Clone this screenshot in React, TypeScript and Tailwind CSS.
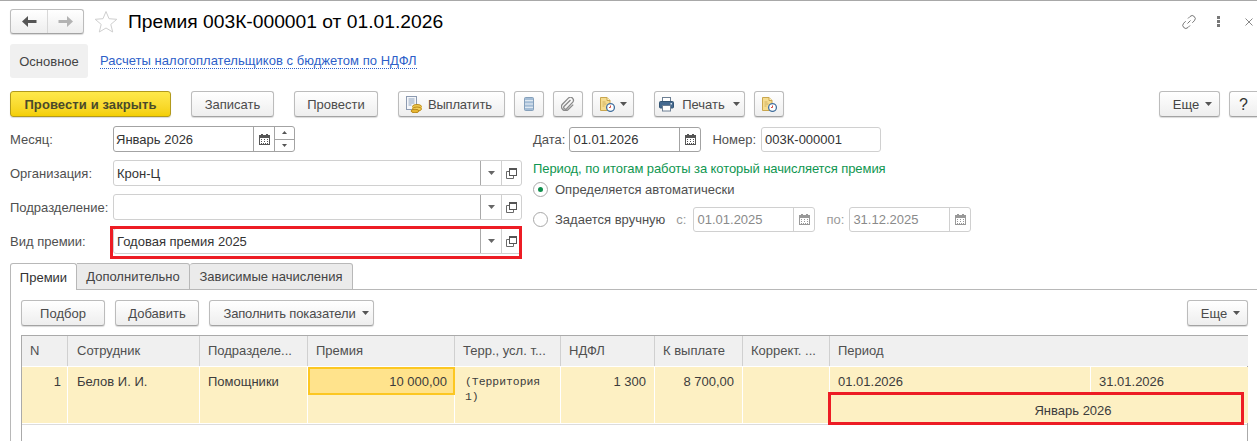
import React from "react";

const Tri = ({ c = "#555" }: { c?: string }) => (
  <svg width="7" height="4" viewBox="0 0 7 4" className="shrink-0"><path d="M0 0h7L3.5 4z" fill={c} /></svg>
);

const Cal = ({ c = "#555" }: { c?: string }) => (
  <svg width="11" height="11" viewBox="0 0 11 11" className="shrink-0">
    <rect x="0.5" y="1.5" width="10" height="9" fill="#fff" stroke={c} />
    <rect x="0" y="1" width="11" height="3" fill={c} />
    <rect x="2" y="0" width="2" height="2" fill={c} />
    <rect x="7" y="0" width="2" height="2" fill={c} />
    <path d="M2 5.5h1M5 5.5h1M8 5.5h1M2 7.5h1M5 7.5h1M8 7.5h1" stroke={c} />
    <path d="M2 9.5h7" stroke={c} strokeDasharray="1 1" />
  </svg>
);

const OpenIcon = () => (
  <svg width="11" height="11" viewBox="0 0 11 11" className="shrink-0">
    <rect x="3.5" y="0.5" width="7" height="7" fill="none" stroke="#555" />
    <path d="M3.5 1.5h7" stroke="#555" />
    <path d="M3 3.5H.5v7h7V8" fill="none" stroke="#6a6a6a" />
  </svg>
);

const DocCoins = () => (
  <svg width="16" height="17" viewBox="0 0 16 17" className="shrink-0">
    <rect x="0.5" y="0.5" width="10" height="13" fill="#f4f6fa" stroke="#8c9ab0" />
    <path d="M2.5 3h6M2.5 5h6M2.5 7h6M2.5 9h3" stroke="#8ea3bd" />
    <ellipse cx="11" cy="10.5" rx="4.5" ry="2" fill="#f2cd55" stroke="#b98a1c" />
    <rect x="6.5" y="10.5" width="9" height="2.5" fill="#eec040" />
    <ellipse cx="11" cy="13" rx="4.5" ry="2" fill="#f2cd55" stroke="#b98a1c" />
    <ellipse cx="9" cy="15" rx="4" ry="1.7" fill="#e8b734" stroke="#b98a1c" />
  </svg>
);

const DocClock = () => (
  <svg width="15" height="15" viewBox="0 0 15 15" className="shrink-0">
    <path d="M.5.5h6.5l3 3v10H.5z" fill="#f5dc8f" stroke="#c9a64e" />
    <path d="M7 .5V3.5h3" fill="#fff4c8" stroke="#c9a64e" />
    <path d="M2.5 5h3M2.5 7h4M2.5 9h2" stroke="#d0b060" />
    <circle cx="10.5" cy="10.5" r="3.9" fill="#fff" stroke="#42709e" strokeWidth="1.3" />
    <path d="M10.5 8.5v2h-1.5" fill="none" stroke="#d24b3e" strokeWidth="1" />
  </svg>
);

const Printer = () => (
  <svg width="15" height="15" viewBox="0 0 15 15" className="shrink-0">
    <rect x="3.5" y="0.5" width="8" height="5" fill="#fff" stroke="#6d7f93" />
    <rect x="0.5" y="4.5" width="14" height="6.5" rx="1" fill="#456a90" stroke="#345574" />
    <rect x="3.5" y="8.5" width="8" height="5.5" fill="#fff" stroke="#6d7f93" />
    <rect x="11.5" y="6" width="1.5" height="1.5" fill="#dbe6f0" />
  </svg>
);

const ListIcon = () => (
  <svg width="10" height="14" viewBox="0 0 10 14" className="shrink-0">
    <rect x="0.5" y="0.5" width="9" height="13" rx="1" fill="#a4bdd6" stroke="#85a0bb" />
    <path d="M1 3.7h8M1 7h8M1 10.3h8" stroke="#eef3f8" />
  </svg>
);

const Clip = () => (
  <svg width="14" height="14" viewBox="0 0 14 14" className="shrink-0">
    <path d="M9.5 3 3.2 9.3a1.7 1.7 0 0 0 2.4 2.4l6.2-6.6a3 3 0 0 0-4.2-4.2L1.4 7.2a4 4 0 0 0 5.6 5.6l5.2-5.2" fill="none" stroke="#8a8a8a" strokeWidth="1.3" />
  </svg>
);

const Btn = ({ w, children, className = "" }: { w: string; children: React.ReactNode; className?: string }) => (
  <div className={`${w} h-[26px] shrink-0 flex items-center justify-center rounded-[3px] border border-[#bcbcbc] border-b-[#a3a3a3] bg-linear-to-b from-white to-[#eeeeee] shadow-[0_1px_1px_rgba(0,0,0,0.15)] text-[#4b4b4b] ${className}`}>
    {children}
  </div>
);

const Label = ({ children }: { children: React.ReactNode }) => (
  <div className="w-[103px] shrink-0 text-[#4f4f4f]">{children}</div>
);

const PickerInput = ({ value }: { value?: string }) => (
  <div className="h-[26px] w-[409px] flex items-stretch rounded-[3px] border border-[#d0d0d0] bg-white">
    <div className="flex-1 pl-[3px] flex items-center text-[#333]">{value}</div>
    <div className="w-[21px] border-l border-[#a9a9a9] flex items-center justify-center"><Tri c="#666" /></div>
    <div className="w-[20px] border-l border-[#d0d0d0] flex items-center justify-center"><OpenIcon /></div>
  </div>
);

const DateField = ({ w, value, dim }: { w: string; value: string; dim?: boolean }) => (
  <div className={`${w} h-[25px] flex items-stretch rounded-[3px] border bg-white ${dim ? "border-[#d0d0d0] text-[#8a8a8a]" : "border-[#a3a3a3] text-[#333]"}`}>
    <div className="flex-1 pl-[3px] flex items-center">{value}</div>
    <div className={`w-[21px] border-l flex items-center justify-center ${dim ? "border-[#d0d0d0]" : "border-[#a3a3a3]"}`}><Cal c={dim ? "#999" : "#555"} /></div>
  </div>
);

const COLS = "grid-cols-[46px_132px_108px_147px_106px_94px_88px_87px_261px_157px]";

const Header = ({ children, className = "" }: { children?: React.ReactNode; className?: string }) => (
  <div className={`bg-[#f0f0f0] h-[30px] pl-[8px] pb-[1px] flex items-center text-[#4f4f4f] whitespace-nowrap overflow-hidden ${className}`}>{children}</div>
);

const Cell = ({ children, className = "" }: { children?: React.ReactNode; className?: string }) => (
  <div className={`bg-[#fdf0c3] px-[8px] pt-[7px] text-[#3c3c3c] row-span-2 ${className}`}>{children}</div>
);

export default function App() {
  return (
    <div className="relative w-[1257px] h-[441px] overflow-hidden bg-white font-['Liberation_Sans',Arial,sans-serif] text-[13px] leading-[15px] border-t border-[#a8a8a8]">
      {/* Title bar */}
      <div className="h-[33px] pt-[8px] pl-[10px] pr-[2px] flex items-center">
        <div className="w-[74px] h-[25px] flex rounded-[3px] border border-[#bcbcbc] border-b-[#a3a3a3] bg-linear-to-b from-white to-[#eeeeee] shadow-[0_1px_1px_rgba(0,0,0,0.15)]">
          <div className="w-[37px] flex items-center justify-center border-r border-[#d8d8d8]">
            <svg width="15" height="11" viewBox="0 0 15 11"><path d="M6 0v4h8.5v3H6v4L0 5.5z" fill="#555" /></svg>
          </div>
          <div className="flex-1 flex items-center justify-center">
            <svg width="15" height="11" viewBox="0 0 15 11"><path d="M9 0v4H.5v3H9v4l6-5.5z" fill="#b3b3b3" /></svg>
          </div>
        </div>
        <svg width="24" height="23" viewBox="0 0 24 23" className="ml-[10px]">
          <path d="M12 1.5l3 7.2 7.8.6-6 5.1 1.9 7.6L12 18l-6.7 4 1.9-7.6-6-5.1 7.8-.6z" fill="none" stroke="#cfcfcf" />
        </svg>
        <div className="ml-[10px] text-[19.25px] leading-[22px] text-black whitespace-nowrap">Премия 003К-000001 от 01.01.2026</div>
        <div className="ml-auto flex items-center">
          <svg width="16" height="16" viewBox="0 0 16 16">
            <path d="M6.5 9.5l3-3M7 4.5l2-2a3 3 0 0 1 4.3 4.3l-2 2M9 11.5l-2 2a3 3 0 0 1-4.3-4.3l2-2" fill="none" stroke="#777" strokeWidth="1" />
          </svg>
          <div className="ml-[20px] flex flex-col gap-[1px]">
            <span className="w-[3px] h-[3px] bg-[#777]" />
            <span className="w-[3px] h-[3px] bg-[#777]" />
            <span className="w-[3px] h-[3px] bg-[#777]" />
          </div>
          <svg width="8" height="8" viewBox="0 0 8 8" className="ml-[25px] mr-[2px]"><path d="M.5.5l7 7M7.5.5l-7 7" stroke="#888" /></svg>
        </div>
      </div>

      {/* Section tabs */}
      <div className="mt-[10px] pl-[10px] flex items-center">
        <div className="w-[78px] h-[34px] rounded-[3px] bg-[#f0f0f0] flex items-center justify-center text-[#444] pt-[1px]">Основное</div>
        <div className="ml-[12px] mt-[1px] text-[#2e5fc9] border-b border-dotted border-[#2e5fc9] leading-[14px] whitespace-nowrap tracking-[0.04px]">Расчеты налогоплательщиков с бюджетом по НДФЛ</div>
      </div>

      {/* Command bar */}
      <div className="mt-[13px] pl-[10px] flex items-center">
        <div className="w-[161px] h-[26px] shrink-0 flex items-center justify-center rounded-[3px] border border-[#b29a1c] bg-linear-to-b from-[#ffe94a] to-[#f4cf00] shadow-[0_1px_1px_rgba(0,0,0,0.15)] font-bold text-[#4a4a2a] tracking-[0.1px]">Провести и закрыть</div>
        <Btn w="w-[83px]" className="ml-[20px]">Записать</Btn>
        <Btn w="w-[84px]" className="ml-[20px]">Провести</Btn>
        <Btn w="w-[107px]" className="ml-[20px] !justify-start pl-[7px] gap-[6px] tracking-[-0.2px]"><DocCoins />Выплатить</Btn>
        <Btn w="w-[30px]" className="ml-[9px]"><ListIcon /></Btn>
        <Btn w="w-[30px]" className="ml-[9px]"><Clip /></Btn>
        <Btn w="w-[42px]" className="ml-[9px] gap-[5px]"><DocClock /><Tri /></Btn>
        <Btn w="w-[91px]" className="ml-[20px] gap-[8px]"><Printer />Печать<Tri /></Btn>
        <Btn w="w-[30px]" className="ml-[9px]"><DocClock /></Btn>
        <Btn w="w-[61px]" className="ml-auto gap-[6px] pl-[6px]"><span className="text-[#444]">Еще</span><Tri /></Btn>
        <Btn w="w-[28px]" className="ml-[9px] rounded-r-none border-r-0"><span className="text-[#333] text-[16px]">?</span></Btn>
      </div>

      {/* Form */}
      <div className="mt-[9px] pl-[10px] flex">
        <div className="w-[522px] shrink-0 flex flex-col gap-[8px]">
          <div className="flex items-center h-[26px]">
            <Label>Месяц:</Label>
            <div className="w-[182px] h-[26px] flex rounded-[3px] border border-[#a3a3a3] bg-white">
              <div className="flex-1 pl-[2px] flex items-center text-[#333]">Январь 2026</div>
              <div className="w-[21px] border-l border-[#a3a3a3] flex items-center justify-center"><Cal /></div>
              <div className="w-[20px] border-l border-[#a3a3a3] flex flex-col">
                <div className="flex-1 border-b border-[#a3a3a3] flex items-center justify-center">
                  <svg width="5" height="3" viewBox="0 0 5 3"><path d="M2.5 0L5 3H0z" fill="#555" /></svg>
                </div>
                <div className="flex-1 flex items-center justify-center">
                  <svg width="5" height="3" viewBox="0 0 5 3"><path d="M0 0h5L2.5 3z" fill="#555" /></svg>
                </div>
              </div>
            </div>
          </div>
          <div className="flex items-center h-[26px]"><Label>Организация:</Label><PickerInput value="Крон-Ц" /></div>
          <div className="flex items-center h-[26px]"><Label>Подразделение:</Label><PickerInput /></div>
          <div className="flex items-center h-[26px]"><Label>Вид премии:</Label><PickerInput value="Годовая премия 2025" /></div>
        </div>

        <div className="ml-[1px] flex-1">
          <div className="flex items-center h-[26px]">
            <span className="text-[#4f4f4f]">Дата:</span>
            <div className="ml-[4px]"><DateField w="w-[132px]" value="01.01.2026" /></div>
            <span className="ml-[11px] text-[#4f4f4f]">Номер:</span>
            <div className="ml-[5px] w-[120px] h-[25px] rounded-[3px] border border-[#d0d0d0] pl-[3px] flex items-center text-[#333]">003К-000001</div>
          </div>
          <div className="mt-[9px] text-[#0f9650] whitespace-nowrap tracking-[-0.08px]">Период, по итогам работы за который начисляется премия</div>
          <div className="mt-[6px] flex items-center h-[15px] text-[#4f4f4f]">
            <div className="w-[15px] h-[15px] rounded-full border border-[#a9a9a9] bg-white flex items-center justify-center">
              <span className="w-[5px] h-[5px] rounded-full bg-[#0f8f4d]" />
            </div>
            <span className="ml-[7px]">Определяется автоматически</span>
          </div>
          <div className="mt-[10px] flex items-center h-[25px] text-[#4f4f4f]">
            <div className="w-[15px] h-[15px] rounded-full border border-[#a9a9a9] bg-white" />
            <span className="ml-[7px]">Задается вручную</span>
            <span className="ml-[11px] text-[#9a9a9a]">с:</span>
            <div className="ml-[7px]"><DateField w="w-[122px]" value="01.01.2025" dim /></div>
            <span className="ml-[11px] text-[#9a9a9a]">по:</span>
            <div className="ml-[5px]"><DateField w="w-[122px]" value="31.12.2025" dim /></div>
          </div>
        </div>
      </div>

      {/* Tabs */}
      <div className="mt-[9px] ml-[10px] flex h-[27px] items-stretch relative z-10">
        <div className="w-[67px] bg-white rounded-t-[3px] border border-b-0 border-[#b8b8b8] flex items-center justify-center text-[#333]">Премии</div>
        <div className="w-[113px] bg-[#ebebeb] border-t border-r border-b border-[#b8b8b8] rounded-tr-[3px] flex items-center justify-center text-[#444]">Дополнительно</div>
        <div className="w-[163px] bg-[#ebebeb] border-t border-r border-b border-[#b8b8b8] rounded-t-[3px] flex items-center justify-center text-[#444]">Зависимые начисления</div>
      </div>

      {/* Tab panel */}
      <div className="ml-[10px] -mt-[1px] border-t border-l border-[#b8b8b8] h-[200px] pl-[10px] pr-[9px] pt-[10px]">
        <div className="flex items-center">
          <Btn w="w-[84px]">Подбор</Btn>
          <Btn w="w-[84px]" className="ml-[10px]">Добавить</Btn>
          <Btn w="w-[165px]" className="ml-[10px] gap-[6px] pl-[9px] tracking-[-0.15px]">Заполнить показатели<Tri /></Btn>
          <Btn w="w-[61px]" className="ml-auto gap-[6px] pl-[6px]">Еще<Tri /></Btn>
        </div>

        <div className="mt-[9px] border border-[#aaaaaa] border-b-0 h-[120px]">
          <div className={`grid ${COLS} grid-rows-[30px_1px_28px_28px] bg-white`}>
            <Header className="border-r border-[#d0d0d0]">N</Header>
            <Header className="!pl-[9px] border-r border-[#d0d0d0]">Сотрудник</Header>
            <Header className="border-r border-[#d0d0d0]">Подразделе...</Header>
            <Header className="border-r border-[#d0d0d0]">Премия</Header>
            <Header className="border-r border-[#d0d0d0]">Терр., усл. т...</Header>
            <Header className="border-r border-[#d0d0d0]">НДФЛ</Header>
            <Header className="border-r border-[#d0d0d0]">К выплате</Header>
            <Header className="border-r border-[#d0d0d0]">Коррект. ...</Header>
            <Header className="col-span-2">Период</Header>

            <div className="col-span-10" />

            <Cell className="text-right !pr-[6px] border-r border-white">1</Cell>
            <Cell className="!pl-[9px] border-r border-white">Белов И. И.</Cell>
            <Cell className="border-r border-white">Помощники</Cell>
            <div className="bg-[#ffe38c] border-2 border-[#fcc722] text-right text-[#3c3c3c] pr-[6px] pt-[5px]">10 000,00</div>
            <Cell className="!pl-[10px] !pt-[8px] border-r border-white font-['Liberation_Mono',monospace] text-[11.4px] leading-[15px] whitespace-pre-line">{"(Территория\n1)"}</Cell>
            <Cell className="text-right border-r border-white">1 300</Cell>
            <Cell className="text-right border-r border-white">8 700,00</Cell>
            <Cell className="border-r border-white" />
            <div className="bg-[#fdf0c3] pl-[8px] pt-[7px] text-[#3c3c3c] border-r border-white">01.01.2026</div>
            <div className="bg-[#fdf0c3] pl-[8px] pt-[7px] text-[#3c3c3c]">31.01.2026</div>
            <div className="bg-[#fdf0c3] border-r border-white" />
            <div className="col-span-2 bg-[#fdf0c3] flex items-center justify-center text-[#3c3c3c] pt-[3px] pl-[68px]">Январь 2026</div>
          </div>
          <div className="mt-[1px] border-t border-[#dcdcdc]" />
        </div>
      </div>

      {/* Annotation frames */}
      <div className="absolute left-[110px] top-[225px] w-[412px] h-[33px] border-[3px] border-[#ed1c24]" />
      <div className="absolute left-[828px] top-[391px] w-[416px] h-[33px] border-[3px] border-[#ed1c24]" />
    </div>
  );
}
